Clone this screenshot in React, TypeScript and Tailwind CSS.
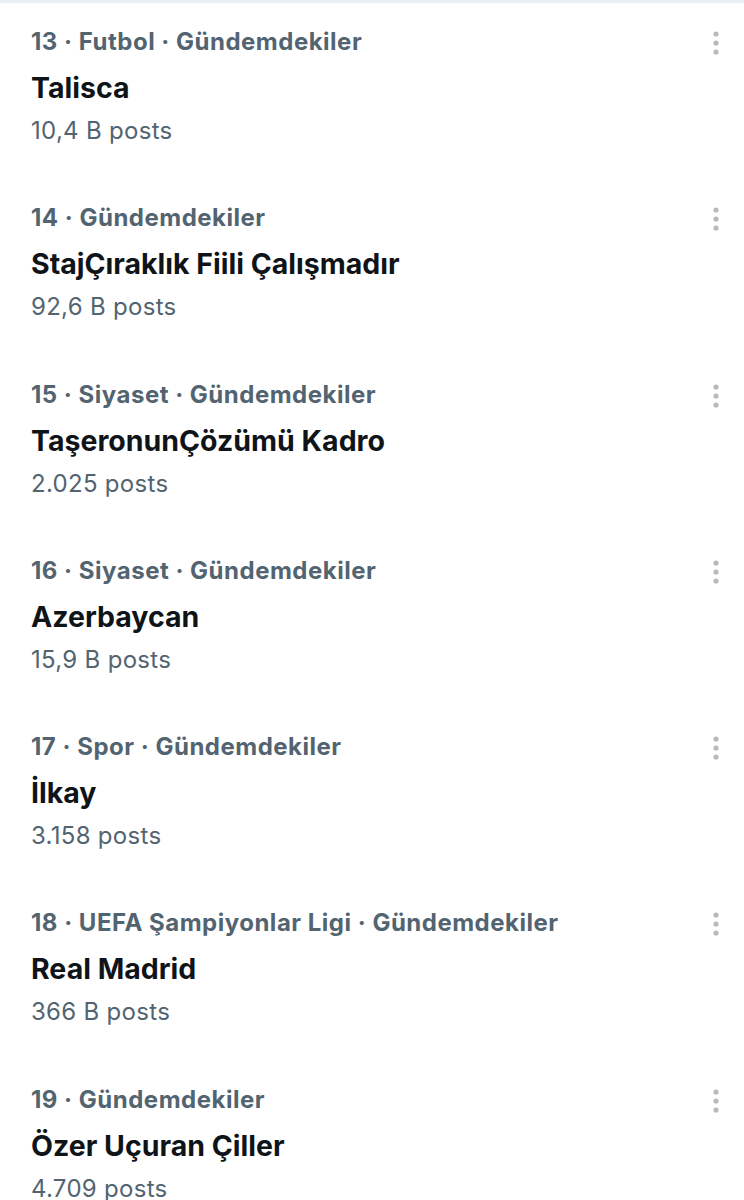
const trends = [
  { rank: 13, category: "Futbol · Gündemdekiler", title: "Talisca", posts: "10,4 B posts" },
  { rank: 14, category: "Gündemdekiler", title: "StajÇıraklık Fiili Çalışmadır", posts: "92,6 B posts" },
  { rank: 15, category: "Siyaset · Gündemdekiler", title: "TaşeronunÇözümü Kadro", posts: "2.025 posts" },
  { rank: 16, category: "Siyaset · Gündemdekiler", title: "Azerbaycan", posts: "15,9 B posts" },
  { rank: 17, category: "Spor · Gündemdekiler", title: "İlkay", posts: "3.158 posts" },
  { rank: 18, category: "UEFA Şampiyonlar Ligi · Gündemdekiler", title: "Real Madrid", posts: "366 B posts" },
  { rank: 19, category: "Gündemdekiler", title: "Özer Uçuran Çiller", posts: "4.709 posts" },
];

function MoreIcon() {
  return (
    <svg width="10" height="24" viewBox="0 0 10 24" className="text-[#b4bcc2]">
      <circle cx="5" cy="3" r="2.6" fill="currentColor" />
      <circle cx="5" cy="12" r="2.6" fill="currentColor" />
      <circle cx="5" cy="21" r="2.6" fill="currentColor" />
    </svg>
  );
}

export default function App() {
  return (
    <div className="min-h-[1200px] w-[744px] overflow-hidden bg-white font-['Inter',sans-serif]">
      <div className="h-[3px] bg-[#eceff1]" />
      {trends.map((t) => (
        <div key={t.rank} className="relative h-[176.3px] pl-[31px] pt-[24px]">
          <div className="text-[24px] leading-[30px] font-bold tracking-[0.5px] text-[#536471]">
            {t.rank} · {t.category}
          </div>
          <div className="mt-[13px] text-[28.5px] leading-[36px] font-bold text-[#0f1419]">{t.title}</div>
          <div className="mt-[10px] text-[24px] leading-[30px] tracking-[0.3px] text-[#536471]">{t.posts}</div>
          <div className="absolute right-[23px] top-[28px]">
            <MoreIcon />
          </div>
        </div>
      ))}
    </div>
  );
}
